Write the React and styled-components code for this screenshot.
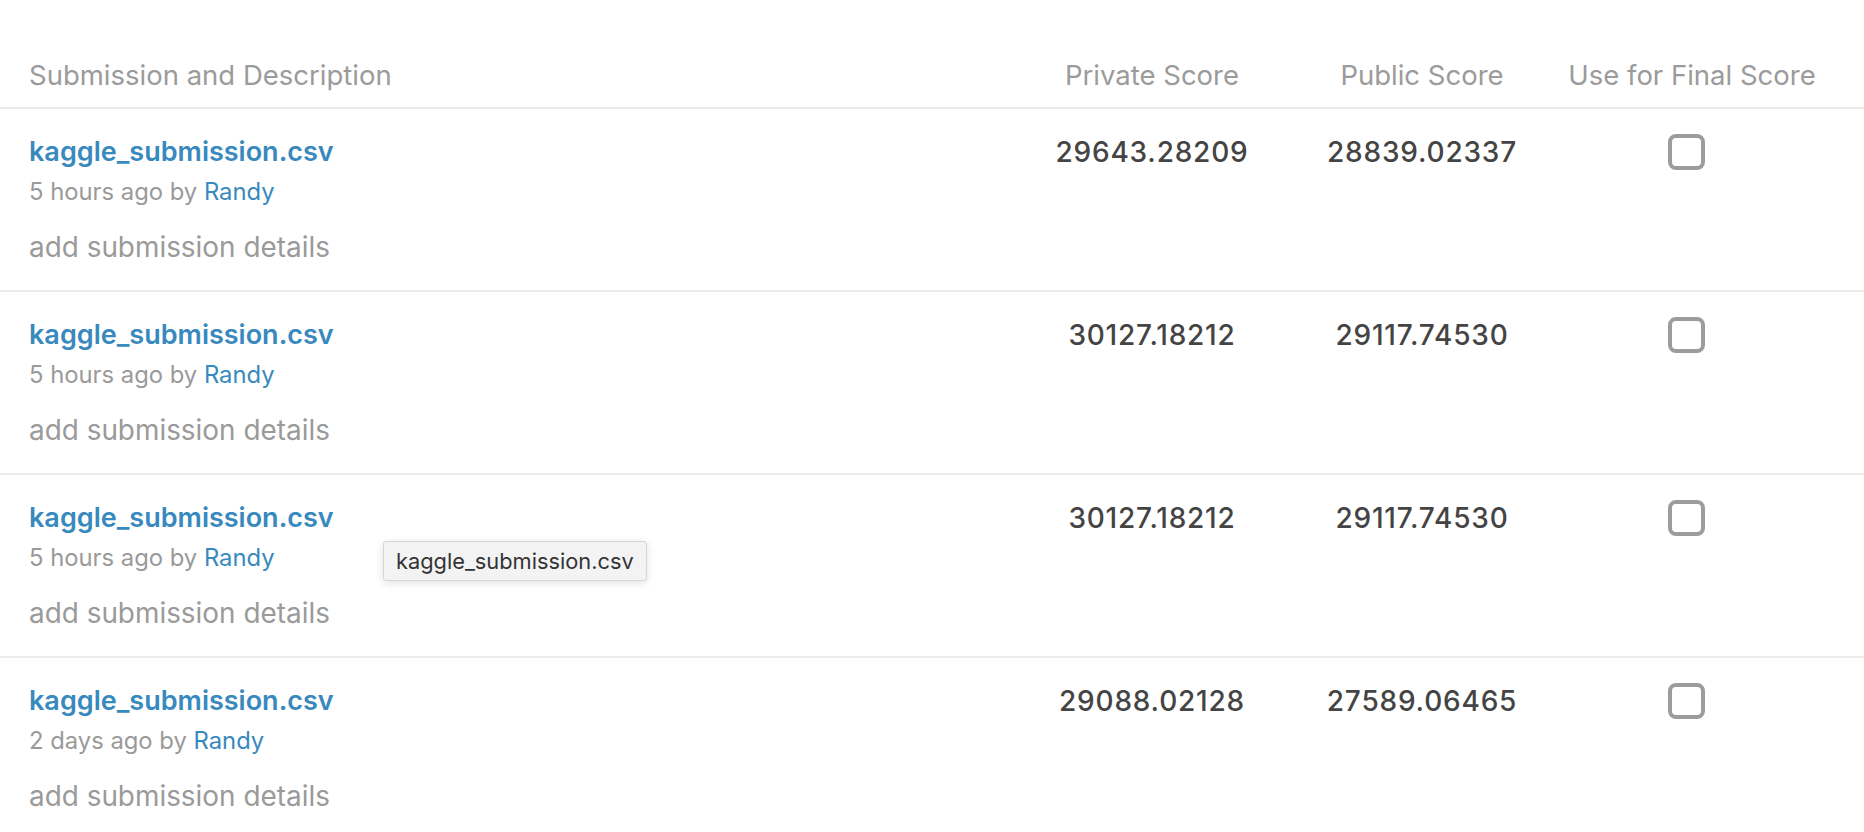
import React from 'react'
import styled, { createGlobalStyle } from 'styled-components'

const GlobalStyle = createGlobalStyle`
    html, body {
        margin: 0;
        padding: 0;
        background: #ffffff;
    }
    body {
        font-family: Inter, "Noto Sans", "Liberation Sans", sans-serif;
        -webkit-font-smoothing: antialiased;
    }
`

const submissions = [
    { file: 'kaggle_submission.csv', when: '5 hours ago', by: 'Randy', priv: '29643.28209', pub: '28839.02337' },
    { file: 'kaggle_submission.csv', when: '5 hours ago', by: 'Randy', priv: '30127.18212', pub: '29117.74530' },
    { file: 'kaggle_submission.csv', when: '5 hours ago', by: 'Randy', priv: '30127.18212', pub: '29117.74530', tooltip: true },
    { file: 'kaggle_submission.csv', when: '2 days ago', by: 'Randy', priv: '29088.02128', pub: '27589.06465' },
]

const App = () => {
    return (
        <>
            <GlobalStyle />
            <Table>
                <HeaderRow>
                    <HeadCell>Submission and Description</HeadCell>
                    <HeadCell center>Private Score</HeadCell>
                    <HeadCell center>Public Score</HeadCell>
                    <HeadCell center>Use for Final Score</HeadCell>
                </HeaderRow>
                {submissions.map((s, i) => (
                    <Row key={i}>
                        <Description>
                            <FileName href="#">{s.file}</FileName>
                            <Meta>
                                {s.when} by <Author href="#">{s.by}</Author>
                            </Meta>
                            <Details>add submission details</Details>
                            {s.tooltip && <Tooltip>{s.file}</Tooltip>}
                        </Description>
                        <Score>{s.priv}</Score>
                        <Score>{s.pub}</Score>
                        <CheckCell>
                            <Checkbox />
                        </CheckCell>
                    </Row>
                ))}
            </Table>
        </>
    )
}

export default App

const columns = '1fr 270px 270px 270px'

const Table = styled.div`
    width: 100%;
`
const HeaderRow = styled.div`
    display: grid;
    grid-template-columns: ${columns};
    height: 109px;
    align-items: end;
    box-sizing: border-box;
    padding: 0 37px 16px 29px;
    border-bottom: 2px solid #ececec;
`
const HeadCell = styled.div`
    font-size: 27.5px;
    line-height: 32px;
    color: #9b9b9b;
    text-align: ${p => (p.center ? 'center' : 'left')};
    white-space: nowrap;
`
const Row = styled.div`
    display: grid;
    grid-template-columns: ${columns};
    height: 183px;
    box-sizing: border-box;
    border-bottom: 2px solid #ececec;
    padding: 27px 37px 0 29px;
    align-items: start;
`
const Description = styled.div`
    position: relative;
    display: flex;
    flex-direction: column;
`
const FileName = styled.a`
    font-size: 27px;
    line-height: 32px;
    font-weight: 600;
    color: #3889bd;
    text-decoration: none;
`
const Meta = styled.div`
    margin-top: 9px;
    font-size: 23.8px;
    line-height: 30px;
    color: #9a9a9a;
`
const Author = styled.a`
    color: #3889bd;
    text-decoration: none;
`
const Details = styled.div`
    margin-top: 24px;
    font-size: 27.9px;
    line-height: 32px;
    color: #9a9a9a;
`
const Score = styled.div`
    font-size: 28px;
    line-height: 32px;
    font-weight: 500;
    color: #444444;
    text-align: center;
    letter-spacing: 0.8px;
`
const CheckCell = styled.div`
    display: flex;
    justify-content: center;
    padding-right: 12px;
`
const Checkbox = styled.span`
    display: block;
    width: 29px;
    height: 28px;
    border: 4px solid #9c9c9c;
    border-radius: 8px;
    margin-top: -2px;
`
const Tooltip = styled.div`
    position: absolute;
    left: 354px;
    top: 39px;
    padding: 0 12px;
    height: 38px;
    line-height: 38px;
    font-size: 21.8px;
    color: #333333;
    background: #f3f3f3;
    border: 1px solid #d6d6d6;
    border-radius: 3px;
    box-shadow: 0 2px 8px rgba(0, 0, 0, 0.12);
    white-space: nowrap;
`
